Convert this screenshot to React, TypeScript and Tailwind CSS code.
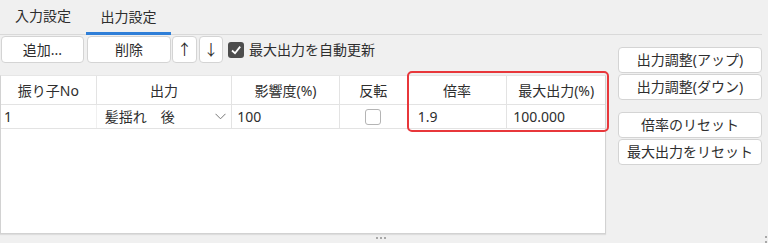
import React from "react";

const font = { fontFamily: '"Noto Sans", "Noto Sans CJK JP", sans-serif' };

function Btn({ children, className = "" }: { children: React.ReactNode; className?: string }) {
  return (
    <div
      className={
        "flex items-center justify-center bg-white border border-[#d4d4d4] rounded-[4px] text-[14px] leading-none text-[#2e2e2e] " +
        className
      }
    >
      {children}
    </div>
  );
}

export default function App() {
  const cols = [96, 136, 108, 68, 100, 98];
  const headers = ["振り子No", "出力", "影響度(%)", "反転", "倍率", "最大出力(%)"];
  return (
    <div
      className="relative w-[768px] h-[243px] bg-[#f0f0f0] overflow-hidden text-[#2e2e2e]"
      style={font}
    >
      {/* Tabs */}
      <div className="flex w-[762px] h-[35px] border-b border-[#d9d9d9]">
        <div className="w-[86px] h-full flex items-center justify-center pb-[3px] text-[14px] leading-none">
          入力設定
        </div>
        <div className="w-[85px] h-full flex flex-col">
          <div className="flex-1 flex items-center justify-center text-[14px] leading-none pt-[1px]">出力設定</div>
          <div className="h-[3px] bg-[#2f7fd8] mb-[-1px]" />
        </div>
      </div>

      <div className="flex">
        {/* Left column */}
        <div className="w-[606px]">
          <div className="flex items-center h-[27px] mt-[1px] pl-[1px]">
            <Btn className="w-[83px] h-[27px]">追加...</Btn>
            <Btn className="w-[84px] h-[27px] ml-[3px]">削除</Btn>
            <Btn className="w-[25px] h-[27px] ml-[1px] text-[15px]">↑</Btn>
            <Btn className="w-[24px] h-[27px] ml-[2px] text-[15px]">↓</Btn>
            <div className="ml-[5px] w-[16px] h-[16px] rounded-[3px] bg-[#4d4d4d] flex items-center justify-center">
              <svg width="12" height="12" viewBox="0 0 12 12">
                <polyline points="2,6.5 5,9.2 10.2,2.6" fill="none" stroke="white" strokeWidth="1.8" />
              </svg>
            </div>
            <div className="ml-[5px] text-[14px] leading-none">最大出力を自動更新</div>
          </div>

          {/* Table */}
          <div className="mt-[12px] h-[159px] bg-white border border-[#d2d2d2] border-t-[#e6e6e6] shadow-[0_1px_1px_rgba(0,0,0,0.08)]">
            <div className="flex h-[29px] border-b border-[#e3e3e3]">
              {headers.map((h, i) => (
                <div
                  key={h}
                  style={{ width: cols[i] }}
                  className={
                    "flex items-center justify-center pt-[2px] text-[14px] leading-none " +
                    (i < 5 ? "border-r border-[#e3e3e3]" : "")
                  }
                >
                  {h}
                </div>
              ))}
            </div>
            <div className="flex h-[24px] border-b border-[#e3e3e3] text-[14px] leading-none">
              <div style={{ width: cols[0] }} className="flex items-center pl-[3px] border-r border-[#f0f0f0]">
                1
              </div>
              <div style={{ width: cols[1] }} className="flex items-center pl-[8px] pr-[5px] border-r border-[#e3e3e3]">
                <span className="flex-1">髪揺れ　後</span>
                <svg width="11" height="7" viewBox="0 0 11 7">
                  <polyline points="0.5,0.8 5.5,5.8 10.5,0.8" fill="none" stroke="#777" strokeWidth="1" />
                </svg>
              </div>
              <div style={{ width: cols[2] }} className="flex items-center pl-[5px] border-r border-[#e3e3e3]">
                100
              </div>
              <div style={{ width: cols[3] }} className="flex items-center justify-center border-r border-[#e3e3e3]">
                <div className="w-[16px] h-[16px] rounded-[3px] border border-[#b4b4b4] bg-white" />
              </div>
              <div style={{ width: cols[4] }} className="flex items-center pl-[10px] border-r border-[#e3e3e3]">
                1.9
              </div>
              <div style={{ width: cols[5] }} className="flex items-center pl-[6px]">
                100.000
              </div>
            </div>
          </div>
        </div>

        {/* Right buttons */}
        <div className="ml-[12px] w-[144px] pt-[12px] flex flex-col">
          <Btn className="h-[26px] border-[#7fb2e8]">出力調整(アップ)</Btn>
          <Btn className="h-[26px] mt-[1px]">出力調整(ダウン)</Btn>
          <Btn className="h-[26px] mt-[12px]">倍率のリセット</Btn>
          <Btn className="h-[26px] mt-[1px]">最大出力をリセット</Btn>
        </div>
      </div>

      {/* Red highlight */}
      <div className="absolute left-[407px] top-[71px] w-[202px] h-[61px] border-2 border-[#e8373b] rounded-[5px]" />

      {/* Splitter dots */}
      <div className="absolute left-[376px] top-[237px] flex gap-[2px]">
        <div className="w-[2px] h-[2px] bg-[#a8a8a8]" />
        <div className="w-[2px] h-[2px] bg-[#a8a8a8]" />
        <div className="w-[2px] h-[2px] bg-[#a8a8a8]" />
      </div>
      <div className="absolute left-[765px] top-[236px] flex flex-col gap-[3px]">
        <div className="w-[2px] h-[2px] bg-[#a8a8a8]" />
        <div className="w-[2px] h-[2px] bg-[#a8a8a8]" />
      </div>
    </div>
  );
}
